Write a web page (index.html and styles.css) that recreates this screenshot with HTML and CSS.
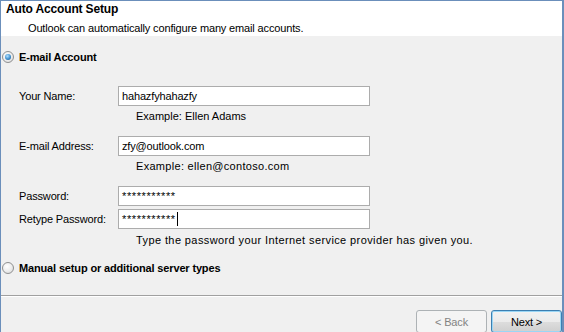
FILE: index.html
```html
<!DOCTYPE html>
<html>
	<head>
		<meta charset="UTF-8">
		<title>Add Account</title>
		<link rel="stylesheet" href="styles.css">
	</head>
	<body>
		<div class="window">
			<div class="header">
				<div class="title">Auto Account Setup</div>
				<div class="subtitle">Outlook can automatically configure many email accounts.</div>
			</div>
			<div class="main">
				<div class="option">
					<span class="radio checked"></span>
					<span class="option-label">E-mail Account</span>
				</div>
				<div class="form">
					<div class="row">
						<span class="label">Your Name:</span>
						<div class="textbox">hahazfyhahazfy</div>
					</div>
					<div class="hint">Example: Ellen Adams</div>
					<div class="row">
						<span class="label">E-mail Address:</span>
						<div class="textbox">zfy@outlook.com</div>
					</div>
					<div class="hint wide">Example: ellen@contoso.com</div>
					<div class="row">
						<span class="label">Password:</span>
						<div class="textbox secret">***********</div>
					</div>
					<div class="row tight">
						<span class="label">Retype Password:</span>
						<div class="textbox secret">***********<span class="caret"></span></div>
					</div>
					<div class="hint last">Type the password your Internet service provider has given you.</div>
				</div>
				<div class="option second">
					<span class="radio"></span>
					<span class="option-label">Manual setup or additional server types</span>
				</div>
			</div>
			<div class="footer">
				<button class="btn" disabled>&lt; Back</button>
				<button class="btn default">Next &gt;</button>
			</div>
		</div>
	</body>
</html>
```

FILE: styles.css
```css
*{
    margin: 0;
    padding: 0;
    box-sizing: border-box;
}
body{
    width: 564px;
    height: 332px;
    overflow: hidden;
    font-family: "Liberation Sans", Arial, sans-serif;
    font-size: 11px;
    letter-spacing: -0.15px;
    color: #000;
    background: #f0f0f0;
}
.window{
    height: 332px;
    border: 1px solid #6b8fbb;
    border-bottom: none;
    border-right-width: 2px;
    background: #f0f0f0;
    display: flex;
    flex-direction: column;
}
.header{
    height: 35px;
    background: #fff;
    padding: 1px 0 0 5px;
}
.title{
    font-size: 12px;
    font-weight: bold;
    line-height: 14px;
}
.subtitle{
    margin-left: 22px;
    line-height: 14px;
    margin-top: 5px;
}
.main{
    flex: 1;
    padding-top: 13px;
}
.option{
    display: flex;
    align-items: center;
    height: 16px;
    gap: 5px;
    padding-left: 1px;
}
.option.second{
    margin-top: 9px;
}
.option-label{
    font-weight: bold;
}
/* windows 7 style radio */
.radio{
    width: 12px;
    height: 12px;
    border-radius: 50%;
    border: 1px solid #8f9091;
    background: radial-gradient(circle at 40% 35%, #ffffff 0%, #eeeeee 50%, #d4d4d4 100%);
    display: flex;
    align-items: center;
    justify-content: center;
}
.radio.checked::after{
    content: "";
    width: 6px;
    height: 6px;
    border-radius: 50%;
    background: radial-gradient(circle at 40% 35%, #b6e2ff 0%, #3d8fcf 55%, #1d4f7c 100%);
}
.form{
    padding-left: 18px;
    margin-top: 21px;
}
.row{
    display: flex;
    align-items: center;
    height: 20px;
    margin-top: 10px;
}
.row:first-child{
    margin-top: 0;
}
.row.tight{
    margin-top: 3px;
}
.label{
    width: 99px;
}
.textbox{
    width: 252px;
    height: 20px;
    border: 1px solid #acacac;
    background: #fff;
    padding-left: 3px;
    line-height: 18px;
    display: flex;
    align-items: center;
}
.secret{
    letter-spacing: 0.6px;
}
.caret{
    width: 1px;
    height: 14px;
    background: #000;
    margin-left: 1px;
}
.hint{
    padding-left: 117px;
    line-height: 20px;
    letter-spacing: 0;
}
.hint.wide{
    letter-spacing: 0.3px;
}
.hint.last{
    line-height: 22px;
    letter-spacing: 0.4px;
}
.footer{
    height: 37px;
    border-top: 1px solid #a0a0a0;
    box-shadow: inset 0 1px 0 #fff;
    display: flex;
    justify-content: flex-end;
    align-items: flex-start;
    gap: 4px;
    padding-top: 14px;
}
.btn{
    width: 71px;
    height: 23px;
    font-family: inherit;
    font-size: 11px;
    letter-spacing: -0.15px;
    color: #000;
    border: 1px solid #707070;
    border-radius: 3px;
    background: linear-gradient(#f2f2f2 0%, #ebebeb 50%, #dddddd 51%, #cfcfcf 100%);
    box-shadow: inset 0 0 0 1px #fcfcfc;
}
.btn:disabled{
    color: #838383;
    border-color: #adb2b5;
    background: #f4f4f4;
    box-shadow: none;
}
.btn.default{
    border-color: #3c7fb1;
    box-shadow: inset 0 0 0 1px #9ad6f5;
}
```
